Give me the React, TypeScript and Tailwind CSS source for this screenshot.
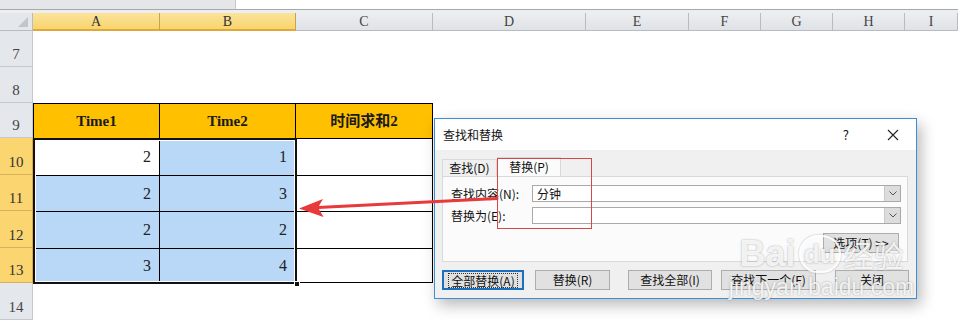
import React from "react";

const cols = [
  { name: "A", w: 127, sel: true },
  { name: "B", w: 136, sel: true },
  { name: "C", w: 137 },
  { name: "D", w: 153 },
  { name: "E", w: 103 },
  { name: "F", w: 72 },
  { name: "G", w: 72 },
  { name: "H", w: 72 },
  { name: "I", w: 53 },
];

const rows = [
  { n: 7, h: 36 },
  { n: 8, h: 36 },
  { n: 9, h: 35 },
  { n: 10, h: 37, sel: true },
  { n: 11, h: 36, sel: true },
  { n: 12, h: 37, sel: true },
  { n: 13, h: 35, sel: true },
  { n: 14, h: 37 },
];

const data: Record<number, [string, string]> = {
  10: ["2", "1"],
  11: ["2", "3"],
  12: ["2", "2"],
  13: ["3", "4"],
};

const serif = "font-['Liberation_Serif','Noto_Sans_CJK_SC',serif]";
const ui = "font-['Noto_Sans_CJK_SC','Liberation_Sans',sans-serif]";

function Cell({ r, c }: { r: number; c: number }) {
  const w = cols[c].w;
  if (r === 9 && c < 3) {
    const label = ["Time1", "Time2", "时间求和2"][c];
    return (
      <div
        style={{ width: w }}
        className={`flex h-full items-center justify-center border-t border-r border-black bg-[#ffc000] text-[15px] font-bold text-[#1a1a1a] ${serif} ${c === 0 ? "border-l" : ""}`}
      >
        {label}
      </div>
    );
  }
  if (r >= 10 && r <= 13 && c < 3) {
    const blue = c < 2 && !(r === 10 && c === 0);
    return (
      <div
        style={{ width: w }}
        className={`flex h-full items-center justify-end border-t border-r border-black pr-[8px] text-[16px] text-[#222] ${serif} ${c === 0 ? "border-l" : ""} ${r === 13 ? "border-b" : ""} ${blue ? "bg-[#b9d7f7]" : "bg-white"}`}
      >
        {c < 2 ? data[r][c] : ""}
      </div>
    );
  }
  return <div style={{ width: w }} className="h-full bg-white" />;
}

function Btn({ children, className = "" }: { children: React.ReactNode; className?: string }) {
  return (
    <div
      className={`flex h-[20px] items-center justify-center border border-[#adadad] bg-[#e1e1e1] text-[12px] text-[#111] ${className}`}
    >
      {children}
    </div>
  );
}

function Chevron() {
  return (
    <div className="flex w-[16px] items-center justify-center border-l border-[#c9c9c9] bg-[#dcdcdc]">
      <svg width="8" height="5" viewBox="0 0 8 5">
        <path d="M0.5 0.5 L4 4 L7.5 0.5" fill="none" stroke="#555" />
      </svg>
    </div>
  );
}

function Dialog() {
  return (
    <div className={`absolute left-[434px] top-[118px] flex h-[181px] w-[483px] flex-col border border-[#3c8fd4] bg-[#f0f0f0] shadow-[4px_6px_14px_rgba(0,0,0,0.28)] ${ui}`}>
      <div className="flex h-[31px] items-center bg-white pl-[8px] text-[12px] text-[#111]">
        <span className="flex-1">查找和替换</span>
        <span className="mr-[38px] text-[13px]">?</span>
        <svg width="12" height="12" viewBox="0 0 12 12" className="mr-[17px]">
          <path d="M1 1 L11 11 M11 1 L1 11" stroke="#222" strokeWidth="1.1" />
        </svg>
      </div>
      <div className="flex flex-1 flex-col px-[7px] pt-[7px]">
        <div className="flex h-[19px] items-end text-[12px] text-[#111]">
          <div className="flex h-[17px] w-[55px] items-center justify-center border border-b-0 border-[#d9d9d9] bg-[#f0f0f0]">查找(D)</div>
          <div className="flex h-[19px] w-[64px] items-center justify-center border border-b-0 border-[#d9d9d9] bg-[#fbfbfb]">替换(P)</div>
        </div>
        <div className="flex h-[86px] w-[466px] flex-col gap-[5px] border border-[#d9d9d9] bg-[#fbfbfb] pl-[8px] pt-[8px] text-[12px] text-[#111]">
          <div className="flex h-[17px] items-center">
            <span className="w-[81px]">查找内容(N):</span>
            <div className="flex h-[17px] w-[369px] border border-[#a9a9a9] bg-white">
              <span className="flex-1 pl-[4px] leading-[15px]">分钟</span>
              <Chevron />
            </div>
          </div>
          <div className="flex h-[17px] items-center">
            <span className="w-[81px]">替换为(E):</span>
            <div className="flex h-[17px] w-[369px] border border-[#a9a9a9] bg-white">
              <span className="flex-1" />
              <Chevron />
            </div>
          </div>
          <div className="mt-[4px] flex justify-end pr-[8px]">
            <Btn className="w-[76px]">选项(T) &gt;&gt;</Btn>
          </div>
        </div>
        <div className="mt-[8px] flex items-center">
          <div className="flex h-[20px] w-[82px] items-center justify-center border-2 border-[#1c6fbf] bg-[#e1e1e1] text-[12px] text-[#111]">
            <span className="border border-dotted border-[#333] px-[2px] leading-[13px]">全部替换(A)</span>
          </div>
          <Btn className="ml-[11px] w-[75px]">替换(R)</Btn>
          <Btn className="ml-[18px] w-[84px]">查找全部(I)</Btn>
          <Btn className="ml-[9px] w-[95px]">查找下一个(F)</Btn>
          <Btn className="ml-[19px] w-[74px]">关闭</Btn>
        </div>
      </div>
    </div>
  );
}

export default function App() {
  return (
    <div className="relative h-[325px] w-[958px] overflow-hidden bg-white">
      {/* formula bar remnant */}
      <div className="flex h-[10px] border-b border-[#a6a8ab]">
        <div className="w-[236px] border-r border-[#c8c8c8] bg-[#e4e6e9]" />
        <div className="flex-1 bg-white" />
      </div>
      <div className="h-[3px] bg-[#eceef1]" />

      {/* column headers */}
      <div className={`flex h-[18px] ${serif}`}>
        <div className="relative w-[33px] border-r border-b border-[#b8bcc2] bg-[#e4e7eb]">
          <svg width="10" height="10" className="absolute right-[4px] bottom-[3px]" viewBox="0 0 10 10">
            <path d="M10 0 L10 10 L0 10 Z" fill="#c2c6cc" />
          </svg>
        </div>
        {cols.map((c) => (
          <div
            key={c.name}
            style={{ width: c.w }}
            className={`flex items-center justify-center border-r text-[14px] ${
              c.sel
                ? "border-b-2 border-r-[#c9a24a] border-b-[#e0a83a] bg-gradient-to-b from-[#fbe39a] to-[#f8d46c] text-[#333]"
                : "border-b border-[#b8bcc2] bg-gradient-to-b from-[#eceef1] to-[#dfe2e6] text-[#444]"
            }`}
          >
            {c.name}
          </div>
        ))}
      </div>

      {/* rows */}
      {rows.map((r) => (
        <div key={r.n} style={{ height: r.h }} className="flex">
          <div
            className={`flex w-[33px] items-end justify-center border-r pb-[1px] text-[15px] ${serif} ${
              r.sel
                ? "border-b border-r-[#e0a83a] border-b-[#d9b05a] bg-[#fbd56f] text-[#333]"
                : "border-b border-[#c5c9ce] bg-[#e4e7eb] text-[#444]"
            }`}
          >
            {r.n}
          </div>
          {cols.map((_, ci) => (
            <Cell key={ci} r={r.n} c={ci} />
          ))}
        </div>
      ))}

      {/* selection outline A10:B13 */}
      <div className="pointer-events-none absolute left-[33px] top-[138px] h-[146px] w-[264px] border-2 border-[#111] shadow-[inset_0_0_0_1px_#fff]" />
      <div className="absolute left-[294px] top-[281px] h-[6px] w-[6px] border border-white bg-[#111]" />

      <Dialog />

      {/* red annotation box */}
      <div className="pointer-events-none absolute left-[497px] top-[158px] h-[71px] w-[95px] border border-[#d54848]" />

      {/* red arrow */}
      <svg className="pointer-events-none absolute left-0 top-0" width="958" height="325">
        <path d="M497 198.5 L318 207.5" stroke="#e8393b" strokeWidth="3" strokeLinecap="round" />
        <path d="M299 208.5 L323 199 L318 207.5 L323.5 217 Z" fill="#e8393b" />
      </svg>

      {/* watermark */}
      <div className="pointer-events-none absolute left-[734px] top-[234px] flex w-[175px] flex-col items-center text-white/85 [text-shadow:0_0_2px_rgba(90,90,90,0.55)]">
        <div className="flex items-center gap-[3px] font-['Liberation_Sans',sans-serif] text-[36px] font-bold leading-[40px]">
          <span>Bai</span>
          <span className="flex h-[38px] w-[42px] items-center justify-center rounded-full border-2 border-white/85 text-[26px] shadow-[0_0_2px_rgba(90,90,90,0.5)]">du</span>
          <span className={`${ui} text-[30px] font-normal`}>经验</span>
        </div>
        <div className="font-['Liberation_Sans',sans-serif] text-[23px] leading-[26px]">jingyan.baidu.com</div>
      </div>
    </div>
  );
}
